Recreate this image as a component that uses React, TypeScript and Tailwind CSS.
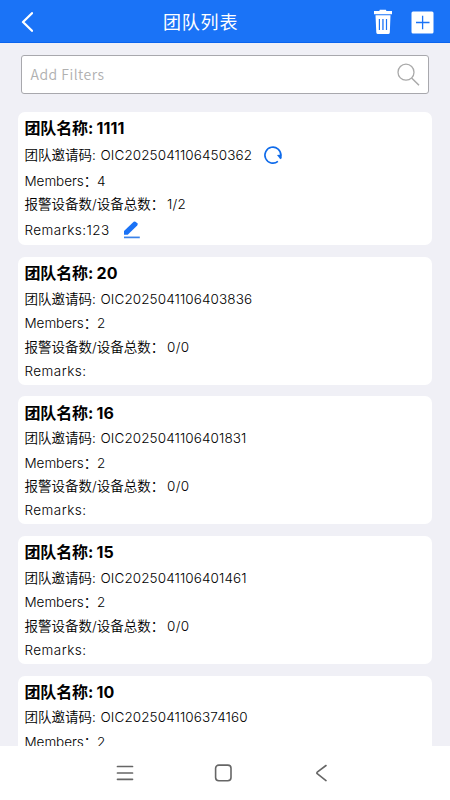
import React from 'react';

type Team = { name: string; code: string; members: string; devices: string; remarks: string; own?: boolean };

const teams: Team[] = [
  { name: '1111', code: 'OIC2025041106450362', members: '4', devices: '1/2', remarks: '123', own: true },
  { name: '20', code: 'OIC2025041106403836', members: '2', devices: '0/0', remarks: '' },
  { name: '16', code: 'OIC2025041106401831', members: '2', devices: '0/0', remarks: '' },
  { name: '15', code: 'OIC2025041106401461', members: '2', devices: '0/0', remarks: '' },
  { name: '10', code: 'OIC2025041106374160', members: '2', devices: '0/0', remarks: '' },
];

function RefreshIcon() {
  return (
    <svg className="ml-[11px] h-5 w-5" viewBox="0 0 20 20" fill="none">
      <path d="M14.9 16.4A8 8 0 1 1 17.9 10.5" stroke="#0f6bea" strokeWidth="1.6" />
      <path d="M14 10.1L18.7 9.4V13.2L17.3 14.2Z" fill="#0f6bea" />
    </svg>
  );
}

function EditIcon() {
  return (
    <svg className="ml-[13px] h-[18px] w-[18px]" viewBox="0 0 18 18">
      <path d="M1 13.7V10.1L10.7 .8Q11.8 0 12.9 .9L14.3 2.3Q15.2 3.4 14.2 4.4L4.7 13.7Z" fill="#1a72f6" />
      <path d="M1 16.4H16.8" stroke="#3b82e8" strokeWidth="1.7" />
    </svg>
  );
}

function TeamCard({ team }: { team: Team }) {
  const own = team.own;
  return (
    <section className={`shrink-0 rounded-[7px] bg-white pl-[6.5px] pt-[4px] text-[13.5px] font-[350] text-black ${own ? 'h-[133.7px]' : 'h-[128px]'}`}>
      <h2 className="flex h-[25px] items-center whitespace-pre text-[16px] font-bold">
        <span className="w-[72px] tracking-[-0.15px]">团队名称: </span>
        <span className="tracking-[0.1px]">{team.name}</span>
      </h2>
      <div className={`flex items-center ${own ? 'h-[29px]' : 'h-[26px]'}`}>
        <span className="w-[76px]">团队邀请码:</span>
        <span className="tracking-[0.1px]">{team.code}</span>
        {own && <RefreshIcon />}
      </div>
      <div className="flex h-[23px] items-center">
        <span className="w-[72.5px] whitespace-nowrap tracking-[-0.05px]">Members：</span>
        <span>{team.members}</span>
      </div>
      <div className="flex h-6 items-center">
        <span className="w-[142.5px]">报警设备数/设备总数：</span>
        <span className="tracking-[0.3px]">{team.devices}</span>
      </div>
      <div className={`flex items-center ${own ? 'h-[27px]' : 'h-6'}`}>
        <span className="w-[62px] tracking-[0.45px]">Remarks:</span>
        {team.remarks && <span className="w-[23.5px] tracking-[0.4px]">{team.remarks}</span>}
        {own && <EditIcon />}
      </div>
    </section>
  );
}

export default function App() {
  return (
    <div className="flex h-[800px] w-[450px] flex-col overflow-hidden bg-[#f0f0f6] font-['Inter','Noto_Sans_CJK_SC',sans-serif]">
      <header className="flex h-[43px] shrink-0 items-center border-b border-[#0b64ee] bg-[#1a73f7] pl-[21px] pr-4 text-white">
        <svg className="mt-0.5 h-5 w-3" viewBox="0 0 12 20" fill="none" stroke="currentColor" strokeWidth="2.3" strokeLinecap="round" strokeLinejoin="round">
          <path d="M11 1.2L2 10L11 18.8" />
        </svg>
        <h1 className="ml-[130px] mt-[3px] text-[18px] font-normal tracking-[0.8px]">团队列表</h1>
        <svg className="ml-auto mt-[2px] h-[26px] w-5" viewBox="0 0 20 26">
          <path fill="currentColor" fillRule="evenodd" d="M1 2H6.5V1Q6.5 .7 7 .7H12.7Q13.2 .7 13.2 1V2H19V5.3H1ZM2.5 6.2H17.5L16.8 23.4Q16.7 25 15.2 25H5Q3.5 25 3.3 23.4ZM5.8 10V21H7V10ZM9.3 10V21H10.6V10ZM12.9 10V21H14.1V10Z" />
        </svg>
        <svg className="ml-[18px] mt-[2px] h-[23px] w-[23px]" viewBox="0 0 23 23">
          <rect x=".5" y=".5" width="22" height="22" rx="1.5" fill="currentColor" />
          <path d="M5 11.5H18.5M11.6 4.7V18.2" stroke="#1a73f7" strokeWidth="1.3" />
        </svg>
      </header>
      <div className="mx-[21px] mt-3 flex h-[39px] shrink-0 items-center justify-between rounded-[3px] border border-[#a8a8ad] bg-white pl-[8.5px] pr-[8.5px]">
        <span className="text-[14px] font-[350] tracking-[0.5px] text-[#b0b0b0] font-['Noto_Sans_CJK_SC',sans-serif]">Add Filters</span>
        <svg className="h-6 w-6" viewBox="0 0 24 24" fill="none" stroke="#a9a9a9" strokeWidth="1.3">
          <circle cx="10" cy="9.2" r="8" />
          <path d="M15.6 15L23 22.2" strokeWidth="1.5" />
        </svg>
      </div>
      <main className="mx-[18px] mt-[17.5px] flex min-h-0 flex-1 flex-col gap-[11.6px] overflow-hidden">
        {teams.map((team) => <TeamCard key={team.code} team={team} />)}
      </main>
      <nav className="flex h-[54px] shrink-0 items-center bg-white pl-[116px] text-[#666]">
        <svg className="h-[18px] w-[18px]" viewBox="0 0 18 18" stroke="currentColor" strokeWidth="1.7" strokeLinecap="round">
          <path d="M1.5 2.5H16.5M1.5 9H16.5M1.5 15.3H16.5" />
        </svg>
        <svg className="ml-20 h-[18px] w-[18px]" viewBox="0 0 18 18" fill="none" stroke="currentColor" strokeWidth="1.6">
          <rect x="1.6" y="1.1" width="15.4" height="15.6" rx="3.2" />
        </svg>
        <svg className="ml-[83px] h-[18px] w-3" viewBox="0 0 12 18" fill="none" stroke="currentColor" strokeWidth="1.6" strokeLinecap="round" strokeLinejoin="round">
          <path d="M11 1.5L2.2 8.2Q1.5 9 2.2 9.7L11 16.6" />
        </svg>
      </nav>
    </div>
  );
}
